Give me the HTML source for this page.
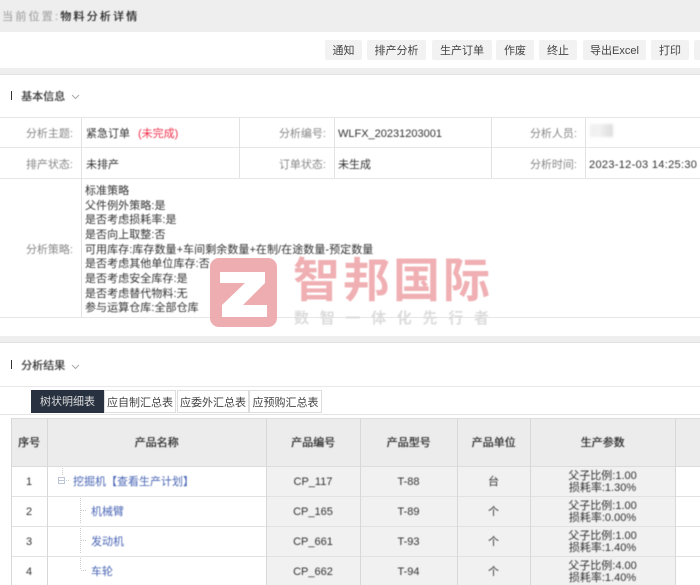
<!DOCTYPE html>
<html lang="zh"><head><meta charset="utf-8"><title>物料分析详情</title>
<style>
html,body{margin:0;padding:0;width:700px;height:585px;overflow:hidden;background:#fff}
body{position:relative;font-family:"Liberation Sans","Noto Sans CJK SC",sans-serif;font-size:11px;color:#333}
.r{position:absolute;}
.t{position:absolute;white-space:nowrap;line-height:16px;filter:blur(.4px)}
.lb{color:#888;text-align:right;width:73px;left:0}
.btn{position:absolute;top:40px;height:20px;line-height:22px;background:#f2f2f2;border-radius:2px;text-align:center;font-size:11px;color:#444;filter:blur(.35px);white-space:nowrap}
.c{text-align:center}
.link{color:#4a66b5}
.tab{position:absolute;top:390px;height:21px;line-height:24px;border:1px solid #ddd;text-align:center;font-size:11px;color:#444;background:#fff;white-space:nowrap}
.th{color:#333;text-align:center;text-shadow:.35px 0 0 #333}
.bd{text-shadow:.35px 0 0 #333}
</style></head><body>
<!-- top -->
<div class="r" style="left:0;top:0;width:700px;height:32px;background:#eee"></div>
<div class="t" style="left:2px;top:9px;font-size:11px;letter-spacing:2.200px;color:#aaa;text-shadow:.3px 0 0 #aaa">当前位置:<span style="color:#333;text-shadow:.4px 0 0 #333">物料分析详情</span></div>
<div class="btn" style="left:325px;width:37px">通知</div>
<div class="btn" style="left:367px;width:59px">排产分析</div>
<div class="btn" style="left:432px;width:60px">生产订单</div>
<div class="btn" style="left:496px;width:38px">作废</div>
<div class="btn" style="left:539px;width:38px">终止</div>
<div class="btn" style="left:583px;width:63px">导出Excel</div>
<div class="btn" style="left:651px;width:38px">打印</div>
<div class="btn" style="left:694px;width:10px"></div>
<div class="r" style="left:0;top:68px;width:700px;height:6px;background:#eee;border-bottom:1px solid #e2e2e2"></div>
<!-- section 1 -->
<div class="r" style="left:11px;top:91px;width:1px;height:9px;background:#333"></div>
<div class="t bd" style="left:21px;top:89px;color:#444">基本信息</div>
<svg class="r" style="left:71px;top:94px" width="9" height="6"><path d="M1 1l3.500 3.500L8 1" fill="none" stroke="#aaa"/></svg>
<!-- info table lines -->
<div class="r" style="left:0;top:117px;width:700px;height:1px;background:#e6e6e6"></div>
<div class="r" style="left:0;top:147px;width:700px;height:1px;background:#e6e6e6"></div>
<div class="r" style="left:0;top:178px;width:700px;height:1px;background:#e6e6e6"></div>
<div class="r" style="left:0;top:317px;width:700px;height:1px;background:#e6e6e6"></div>
<div class="r" style="left:81px;top:117px;width:1px;height:201px;background:#e2e2e2"></div>
<div class="r" style="left:239px;top:117px;width:1px;height:61px;background:#e2e2e2"></div>
<div class="r" style="left:334px;top:117px;width:1px;height:61px;background:#e2e2e2"></div>
<div class="r" style="left:491px;top:117px;width:1px;height:61px;background:#e2e2e2"></div>
<div class="r" style="left:585px;top:117px;width:1px;height:61px;background:#e2e2e2"></div>
<div class="t lb" style="top:126px">分析主题:</div>
<div class="t lb" style="top:157px">排产状态:</div>
<div class="t lb" style="top:242px">分析策略:</div>
<div class="t" style="left:86px;top:126px">紧急订单<span style="color:#f0304a;margin-left:8px">(未完成)</span></div>
<div class="t" style="left:86px;top:157px">未排产</div>
<div class="t lb" style="top:126px;left:253px">分析编号:</div>
<div class="t lb" style="top:157px;left:253px">订单状态:</div>
<div class="t" style="left:338px;top:126px">WLFX_20231203001</div>
<div class="t" style="left:338px;top:157px">未生成</div>
<div class="t lb" style="top:126px;left:504px">分析人员:</div>
<div class="t lb" style="top:157px;left:504px">分析时间:</div>
<div class="r" style="left:590px;top:124px;width:23px;height:13px;background:linear-gradient(90deg,#f0f0f0,#f2f2f2 40%,#dcdcdc);filter:blur(1.200px)"></div>
<div class="t" style="left:589px;top:157px;letter-spacing:.32px">2023-12-03 14:25:30</div>
<div class="t" style="left:85px;top:184px;line-height:14.65px;letter-spacing:.06px">标准策略<br>父件例外策略:是<br>是否考虑损耗率:是<br>是否向上取整:否<br>可用库存:库存数量+车间剩余数量+在制/在途数量-预定数量<br>是否考虑其他单位库存:否<br>是否考虑安全库存:是<br>是否考虑替代物料:无<br>参与运算仓库:全部仓库</div>
<div class="r" style="left:0;top:336px;width:700px;height:6px;background:#eee;border-bottom:1px solid #e2e2e2"></div>
<!-- section 2 -->
<div class="r" style="left:11px;top:360px;width:1px;height:9px;background:#333"></div>
<div class="t bd" style="left:21px;top:358px;color:#444">分析结果</div>
<svg class="r" style="left:71px;top:364px" width="9" height="6"><path d="M1 1l3.500 3.500L8 1" fill="none" stroke="#aaa"/></svg>
<div class="r" style="left:0;top:386px;width:700px;height:1px;background:#e8e8e8"></div>
<div class="r" style="left:0;top:414px;width:700px;height:1px;background:#e4e4e4"></div>
<div class="tab" style="left:31px;width:73px;height:23px;line-height:25px;border:0;background:#27313f;color:#ddd">树状明细表</div>
<div class="tab" style="left:104px;width:70px">应自制汇总表</div>
<div class="tab" style="left:177px;width:70px">应委外汇总表</div>
<div class="tab" style="left:249px;width:71px">应预购汇总表</div>
<!-- grid backgrounds -->
<div class="r" style="left:11px;top:419px;width:689px;height:47px;background:#ececec"></div>
<div class="r" style="left:266px;top:466px;width:409px;height:119px;background:#f1f1f1"></div>
<!-- grid lines -->
<div class="r" style="left:11px;top:418px;width:689px;height:1px;background:#ddd"></div>
<div class="r" style="left:11px;top:466px;width:689px;height:1px;background:#dcdcdc"></div>
<div class="r" style="left:11px;top:496px;width:689px;height:1px;background:#e2e2e2"></div>
<div class="r" style="left:11px;top:526px;width:689px;height:1px;background:#e2e2e2"></div>
<div class="r" style="left:11px;top:556px;width:689px;height:1px;background:#e2e2e2"></div>
<div class="r" style="left:11px;top:418px;width:1px;height:167px;background:#d8d8d8"></div>
<div class="r" style="left:47px;top:418px;width:1px;height:167px;background:#d8d8d8"></div>
<div class="r" style="left:266px;top:418px;width:1px;height:167px;background:#d8d8d8"></div>
<div class="r" style="left:360px;top:418px;width:1px;height:167px;background:#d8d8d8"></div>
<div class="r" style="left:457px;top:418px;width:1px;height:167px;background:#d8d8d8"></div>
<div class="r" style="left:530px;top:418px;width:1px;height:167px;background:#d8d8d8"></div>
<div class="r" style="left:675px;top:418px;width:1px;height:167px;background:#d8d8d8"></div>
<!-- header text -->
<div class="t th" style="left:11px;width:36px;top:435px">序号</div>
<div class="t th" style="left:47px;width:219px;top:435px">产品名称</div>
<div class="t th" style="left:266px;width:94px;top:435px">产品编号</div>
<div class="t th" style="left:360px;width:97px;top:435px">产品型号</div>
<div class="t th" style="left:457px;width:73px;top:435px">产品单位</div>
<div class="t th" style="left:530px;width:145px;top:435px">生产参数</div>
<!-- rows -->
<div class="t c" style="left:11px;width:36px;top:474px">1</div>
<div class="t c" style="left:11px;width:36px;top:504px">2</div>
<div class="t c" style="left:11px;width:36px;top:534px">3</div>
<div class="t c" style="left:11px;width:36px;top:564px">4</div>
<svg class="r" style="left:55px;top:466px" width="40" height="119" fill="none" stroke="#ccc" stroke-dasharray="1 1">
<path d="M7.500 2v7M11 14.500h3M25.500 32v25M26 44.500h6M25.500 62v25M26 74.500h6M25.500 92v12M26 104.500h6"/>
<rect x="3.500" y="11.500" width="6" height="6" stroke="#bcc6d8" stroke-dasharray="none"/>
<path d="M4 14.500h5" stroke="#bcc6d8" stroke-dasharray="none"/>
</svg>
<div class="t link" style="left:73px;top:474px">挖掘机【查看生产计划】</div>
<div class="t link" style="left:91px;top:504px">机械臂</div>
<div class="t link" style="left:91px;top:534px">发动机</div>
<div class="t link" style="left:91px;top:564px">车轮</div>
<div class="t c" style="left:266px;width:94px;top:474px">CP_117</div>
<div class="t c" style="left:266px;width:94px;top:504px">CP_165</div>
<div class="t c" style="left:266px;width:94px;top:534px">CP_661</div>
<div class="t c" style="left:266px;width:94px;top:564px">CP_662</div>
<div class="t c" style="left:360px;width:97px;top:474px">T-88</div>
<div class="t c" style="left:360px;width:97px;top:504px">T-89</div>
<div class="t c" style="left:360px;width:97px;top:534px">T-93</div>
<div class="t c" style="left:360px;width:97px;top:564px">T-94</div>
<div class="t c" style="left:457px;width:73px;top:474px">台</div>
<div class="t c" style="left:457px;width:73px;top:504px">个</div>
<div class="t c" style="left:457px;width:73px;top:534px">个</div>
<div class="t c" style="left:457px;width:73px;top:564px">个</div>
<div class="t c" style="left:530px;width:145px;top:470px;line-height:12px">父子比例:1.00<br>损耗率:1.30%</div>
<div class="t c" style="left:530px;width:145px;top:500px;line-height:12px">父子比例:1.00<br>损耗率:0.00%</div>
<div class="t c" style="left:530px;width:145px;top:530px;line-height:12px">父子比例:1.00<br>损耗率:1.40%</div>
<div class="t c" style="left:530px;width:145px;top:560px;line-height:12px">父子比例:4.00<br>损耗率:1.40%</div>
<!-- watermark -->
<svg class="r" style="left:210px;top:258px;opacity:.96" width="68" height="70"><rect width="67" height="69" rx="9" fill="#eeaaae"/><path d="M10 14H55V25L33 47H57V59H12V47L35 25H10z" fill="#fff"/></svg>
<div class="t" style="left:293px;top:254px;font-size:47px;line-height:54px;color:#f0b0b3;font-weight:bold;letter-spacing:3px">智邦国际</div>
<div class="t" style="left:294px;top:309px;font-size:15px;line-height:20px;color:#dcdcdc;letter-spacing:10.700px;font-weight:bold">数智一体化先行者</div>
</body></html>
